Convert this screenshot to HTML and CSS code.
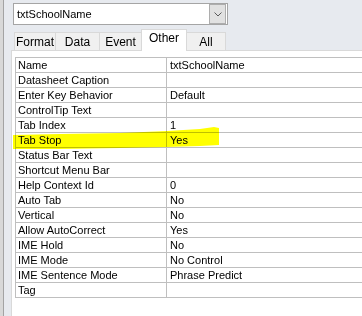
FILE: index.html
```html
<!DOCTYPE html>
<html lang="en">
<head>
    <meta charset="UTF-8">
    <meta name="viewport" content="width=device-width, initial-scale=1.0">
    <title>Property Sheet</title>
    <link rel="stylesheet" href="styles.css">
</head>
<body>
    <div class="sheet">
        <div class="combo">
            <span class="combo-text">txtSchoolName</span>
            <span class="combo-btn">
                <svg width="8" height="5" viewBox="0 0 8 5"><polyline points="0.5,0.5 4,4 7.5,0.5" fill="none" stroke="#5a5a5a" stroke-width="1"/></svg>
            </span>
        </div>

        <div class="tabs">
            <div class="tab tab-format">Format</div>
            <div class="tab tab-data">Data</div>
            <div class="tab tab-event">Event</div>
            <div class="tab tab-other active">Other</div>
            <div class="tab tab-all">All</div>
        </div>

        <div class="panel">
            <div class="props">
                <div class="row"><div class="name">Name</div><div class="value">txtSchoolName</div></div>
                <div class="row"><div class="name">Datasheet Caption</div><div class="value"></div></div>
                <div class="row"><div class="name">Enter Key Behavior</div><div class="value">Default</div></div>
                <div class="row"><div class="name">ControlTip Text</div><div class="value"></div></div>
                <div class="row"><div class="name">Tab Index</div><div class="value">1</div></div>
                <div class="row"><div class="name">Tab Stop</div><div class="value">Yes</div></div>
                <div class="row"><div class="name">Status Bar Text</div><div class="value"></div></div>
                <div class="row"><div class="name">Shortcut Menu Bar</div><div class="value"></div></div>
                <div class="row"><div class="name">Help Context Id</div><div class="value">0</div></div>
                <div class="row"><div class="name">Auto Tab</div><div class="value">No</div></div>
                <div class="row"><div class="name">Vertical</div><div class="value">No</div></div>
                <div class="row"><div class="name">Allow AutoCorrect</div><div class="value">Yes</div></div>
                <div class="row"><div class="name">IME Hold</div><div class="value">No</div></div>
                <div class="row"><div class="name">IME Mode</div><div class="value">No Control</div></div>
                <div class="row"><div class="name">IME Sentence Mode</div><div class="value">Phrase Predict</div></div>
                <div class="row"><div class="name">Tag</div><div class="value"></div></div>
            </div>
        </div>
    </div>

    <!-- highlighter stroke over the Tab Stop row -->
    <svg class="marker" width="362" height="316" viewBox="0 0 362 316">
        <path d="M13,135 L60,134 L120,133 L167,131 L200,129 L214,127 L219,128 L219,145 L200,146 L167,147 L120,148 L60,149 L13,149 Z" fill="#ffff00"/>
    </svg>
</body>
</html>
```

FILE: styles.css
```css
html, body {
    margin: 0;
    padding: 0;
}
body {
    width: 362px;
    height: 316px;
    overflow: hidden;
    position: relative;
    background: #d8d8d8;
    font-family: 'Liberation Sans', Arial, sans-serif;
    font-size: 11px;
    color: #000;
}
.sheet {
    margin-left: 3px;
    height: 316px;
    border-left: 1px solid #a3a3a3;
    background: #e7eaef;
    padding-top: 3px;
    padding-left: 7px;
    box-sizing: border-box;
    display: flex;
    flex-direction: column;
}
.combo {
    margin-left: 2px;
    width: 215px;
    height: 22px;
    box-sizing: border-box;
    border: 1px solid #a5a5a5;
    background: white;
    display: flex;
    align-items: center;
    justify-content: space-between;
}
.combo-text {
    padding-left: 3px;
}
.combo-btn {
    width: 17px;
    height: 20px;
    box-sizing: border-box;
    margin-right: 1px;
    background: #e1e1e1;
    border: 1px solid #adadad;
    display: flex;
    align-items: center;
    justify-content: center;
}
.tabs {
    display: flex;
    align-items: flex-end;
    margin-top: 4px;
    margin-left: 3px;
    height: 21px;
    position: relative;
    z-index: 1;
}
.tab {
    height: 18px;
    box-sizing: border-box;
    background: #f0f0f0;
    border: 1px solid #d9d9d9;
    border-bottom: none;
    margin-right: -1px;
    display: flex;
    align-items: center;
    justify-content: center;
    font-size: 12px;
}
.tab-format { width: 42px; }
.tab-data { width: 45px; }
.tab-event { width: 43px; }
.tab-other { width: 46px; }
.tab-all { width: 40px; }
.tab.active {
    height: 22px;
    margin-bottom: -1px;
    background: white;
    padding-bottom: 5px;
}
.panel {
    flex: 1;
    background: white;
    border-top: 1px solid #d9d9d9;
    border-left: 1px solid #d9d9d9;
    padding-top: 6px;
    padding-left: 3px;
    overflow: hidden;
}
.props {
    width: 420px;
    border-top: 1px solid #bfbfbf;
    border-left: 1px solid #bfbfbf;
}
.row {
    display: flex;
    height: 15px;
    box-sizing: border-box;
    border-bottom: 1px solid #bfbfbf;
    line-height: 14px;
}
.name {
    width: 151px;
    padding-left: 2px;
    box-sizing: border-box;
    border-right: 1px solid #bfbfbf;
    white-space: nowrap;
}
.value {
    flex: 1;
    padding-left: 3px;
    white-space: nowrap;
}
.marker {
    position: absolute;
    left: 0;
    top: 0;
    mix-blend-mode: multiply;
    pointer-events: none;
}
```
